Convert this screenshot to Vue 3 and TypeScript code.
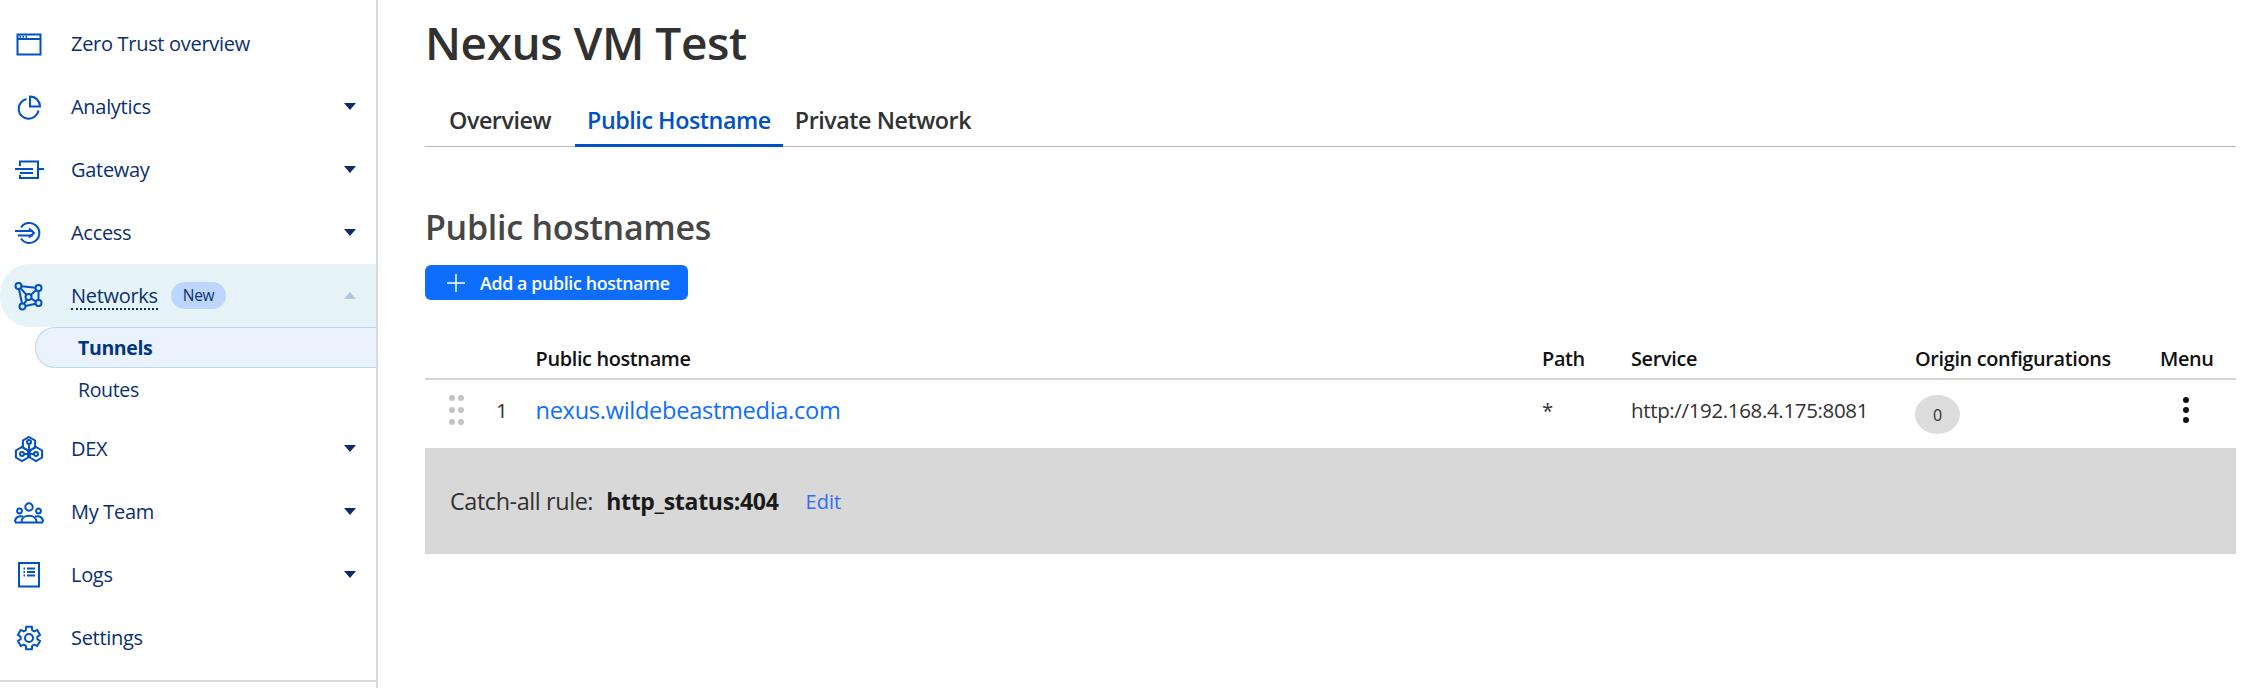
<script setup lang="ts">
// Tunnel detail page: left nav + public hostname table.

type NavItem = {
  label: string;
  paths: string[];
  caret?: boolean;
};

function gearPath(cx: number, cy: number, outer: number, inner: number): string {
  const pts: string[] = [];
  for (let i = 0; i < 6; i++) {
    const a = (Math.PI / 3) * i - Math.PI / 2;
    const spread = [-0.25, 0.25];
    for (const s of spread) {
      pts.push(`${(cx + outer * Math.cos(a + s)).toFixed(2)} ${(cy + outer * Math.sin(a + s)).toFixed(2)}`);
    }
    const m = a + Math.PI / 6;
    pts.push(`${(cx + inner * Math.cos(m - 0.14)).toFixed(2)} ${(cy + inner * Math.sin(m - 0.14)).toFixed(2)}`);
    pts.push(`${(cx + inner * Math.cos(m + 0.14)).toFixed(2)} ${(cy + inner * Math.sin(m + 0.14)).toFixed(2)}`);
  }
  return "M" + pts.join("L") + "Z";
}

const hex = (x: number, y: number, r: number) =>
  `M${x} ${y - r}L${x + r * 0.87} ${y - r / 2}V${y + r / 2}L${x} ${y + r}L${x - r * 0.87} ${y + r / 2}V${y - r / 2}Z`;
const ring = (x: number, y: number, r: number) =>
  `M${x - r} ${y}a${r} ${r} 0 1 0 ${r * 2} 0a${r} ${r} 0 1 0 ${-r * 2} 0Z`;

const topItems: NavItem[] = [
  {
    label: "Zero Trust overview",
    paths: ["M4.5 6.5H27.5V26.5H4.5Z", "M4.5 11H27.5", "M6.5 8.8H8M9.5 8.8H11M12.5 8.8H14"],
  },
  {
    label: "Analytics",
    caret: true,
    paths: ["M13.5 8A10 10 0 1 0 25.5 19.5", "M17 5.5A10 10 0 0 1 27 15.5H17Z"],
  },
  {
    label: "Gateway",
    caret: true,
    paths: ["M7 12V7.5H25V24H7V21", "M2 15H20", "M7 19H20", "M25 15H31"],
  },
  {
    label: "Access",
    caret: true,
    paths: ["M8 10.5A10 10 0 1 1 8 21.5", "M2 14H20", "M5 18.5H20", "M16 11.5L21 16L16 20.5"],
  },
];

const networkPaths = [
  ring(5.5, 6, 3),
  ring(25.5, 8, 3),
  ring(25.5, 23, 3),
  ring(9.5, 26.5, 3),
  ring(15.5, 17, 3),
  "M8.5 6.3L22.5 7.7M6 9L9 23.5M12.5 26L22.6 23.7M25.5 11V20",
  "M7.6 8.2L13.4 14.8M23.2 10L17.8 15M11 23.8L14 19.6M22.8 21.6L18.2 18.4",
];

const bottomItems: NavItem[] = [
  {
    label: "DEX",
    caret: true,
    paths: [
      hex(16, 11, 7),
      hex(9, 21, 7),
      hex(23, 21, 7),
      ring(16, 9, 2),
      ring(9, 21, 2),
      ring(23, 21, 2),
      "M16 11V17M11 21H21",
    ],
  },
  {
    label: "My Team",
    caret: true,
    paths: [
      ring(16, 11, 3.7),
      ring(6.5, 15, 2.4),
      ring(25.5, 15, 2.4),
      "M2 26.5H30",
      "M8.5 26C8.5 17.5 23.5 17.5 23.5 26",
      "M2 26C2 20.5 6.5 19.5 10 20.5M30 26C30 20.5 25.5 19.5 22 20.5",
    ],
  },
  {
    label: "Logs",
    caret: true,
    paths: [
      "M6 4H26V27.5H6Z",
      "M10.5 9.5H12M14 9.5H22M10.5 13H12M14 13H22M10.5 16.5H12M14 16.5H22",
    ],
  },
  {
    label: "Settings",
    paths: [gearPath(16, 16, 11.5, 8.5), ring(16, 16, 4)],
  },
];
</script>

<template>
  <div class="page">
    <aside class="sidebar">
      <nav class="nav">
        <a v-for="item in topItems" :key="item.label" class="nav-row">
          <svg class="nav-icon" viewBox="0 0 32 32"><path v-for="d in item.paths" :key="d" :d="d" /></svg>
          <span class="nav-label">{{ item.label }}</span>
          <span v-if="item.caret" class="caret" />
        </a>

        <a class="nav-row open">
          <svg class="nav-icon" viewBox="0 0 32 32"><path v-for="d in networkPaths" :key="d" :d="d" /></svg>
          <span class="nav-label dotted">Networks</span>
          <span class="new-badge">New</span>
          <span class="caret up" />
        </a>
        <a class="sub-row active">Tunnels</a>
        <a class="sub-row">Routes</a>

        <div class="nav-rest">
          <a v-for="item in bottomItems" :key="item.label" class="nav-row">
            <svg class="nav-icon" viewBox="0 0 32 32"><path v-for="d in item.paths" :key="d" :d="d" /></svg>
            <span class="nav-label">{{ item.label }}</span>
            <span v-if="item.caret" class="caret" />
          </a>
        </div>
      </nav>
      <hr class="side-rule" />
    </aside>

    <main class="main">
      <h1 class="title">Nexus VM Test</h1>

      <div class="tabs">
        <a class="tab">Overview</a>
        <a class="tab active">Public Hostname</a>
        <a class="tab">Private Network</a>
      </div>

      <h2 class="section-title">Public hostnames</h2>

      <button type="button" class="add-btn">
        <svg class="plus" viewBox="0 0 18 18"><path d="M9 0V18M0 9H18" /></svg>
        Add a public hostname
      </button>

      <div class="table">
        <div class="table-row head">
          <span />
          <span>Public hostname</span>
          <span>Path</span>
          <span>Service</span>
          <span>Origin configurations</span>
          <span>Menu</span>
        </div>
        <div class="table-row body">
          <span class="drag-cell">
            <span class="drag"><i v-for="n in 6" :key="n" /></span>
            <span class="index">1</span>
          </span>
          <a class="host">nexus.wildebeastmedia.com</a>
          <span class="path">*</span>
          <span class="service">http://192.168.4.175:8081</span>
          <span class="count-cell"><span class="count">0</span></span>
          <span class="menu"><i /><i /><i /></span>
        </div>
        <div class="catch-all">
          <span class="catch-label">Catch-all rule:</span>
          <strong class="catch-value">http_status:404</strong>
          <a class="edit">Edit</a>
        </div>
      </div>
    </main>
  </div>
</template>

<style>
html,
body {
  margin: 0;
  background: #fff;
  overflow: hidden;
}
</style>

<style scoped>
.page {
  display: flex;
  width: 2257px;
  height: 688px;
  overflow: hidden;
  font-family: "Open Sans", "Noto Sans", sans-serif;
  color: #313131;
}

.sidebar {
  width: 378px;
  box-sizing: border-box;
  flex: none;
  border-right: 2px solid #d9d9d9;
  padding-top: 12px;
}

.nav-row {
  display: flex;
  align-items: center;
  height: 63px;
  color: #0a2f6e;
  font-size: 20px;
  letter-spacing: -0.3px;
}

.nav-icon {
  width: 32px;
  height: 32px;
  margin: 0 26px 0 13px;
  flex: none;
  fill: none;
  stroke: #0051c3;
  stroke-width: 2;
}

.nav-label.dotted {
  border-bottom: 2px dotted #0a2f6e;
  line-height: 25px;
  margin-top: 2px;
}

.new-badge {
  margin-left: 13px;
  padding: 0 12px;
  height: 27px;
  line-height: 27px;
  border-radius: 14px;
  background: #bdd6fd;
  font-size: 15.5px;
}

.caret {
  margin-left: auto;
  margin-right: 20px;
  border-left: 6.5px solid transparent;
  border-right: 6.5px solid transparent;
  border-top: 7px solid #0b2a66;
}

.caret.up {
  border-top: 0;
  border-bottom: 7px solid #b4c8da;
}

.nav-row.open {
  background: #e6f4fa;
  border-radius: 30px 0 0 30px;
}

.sub-row {
  display: flex;
  align-items: center;
  box-sizing: border-box;
  height: 42px;
  padding-left: 78px;
  color: #0a2f6e;
  font-size: 19.5px;
  letter-spacing: -0.35px;
}

.sub-row.active {
  height: 41px;
  margin-left: 35px;
  padding-left: 42px;
  background: #eaf2fd;
  border: 1px solid #bcd6fb;
  border-right: 0;
  border-radius: 20px 0 0 20px;
  font-weight: 700;
  color: #003681;
}

.nav-rest {
  margin-top: 7px;
}

.side-rule {
  margin: 11px 0 0;
  border: 0;
  border-top: 2px solid #d9d9d9;
}

.main {
  flex: 1;
  min-width: 0;
  padding: 0 21px 0 47px;
}

.title {
  margin: 16px 0 0 0;
  font-size: 46px;
  line-height: 52px;
  font-weight: 600;
  letter-spacing: -0.45px;
  color: #313131;
}

.tabs {
  display: flex;
  height: 79px;
  box-sizing: border-box;
  border-bottom: 1px solid #b8b8b8;
  align-items: flex-end;
}

.tab {
  padding: 0 12px 7px;
  font-size: 23.3px;
  line-height: 33px;
  font-weight: 600;
  letter-spacing: -0.45px;
  margin-bottom: -1px;
  border-bottom: 3px solid transparent;
}

.tab:first-child {
  padding: 0 24px 7px 24px;
}

.tab.active {
  color: #0051c3;
  border-bottom-color: #0051c3;
}

.section-title {
  margin: 58px 0 0;
  font-size: 34px;
  line-height: 44px;
  font-weight: 600;
  letter-spacing: -0.28px;
  color: #464646;
}

.add-btn {
  display: flex;
  align-items: center;
  height: 35px;
  margin-top: 16px;
  padding: 0 18px 0 22px;
  gap: 15px;
  border: 0;
  border-radius: 6px;
  background: #0d6efd;
  color: #fff;
  font-family: inherit;
  font-size: 17.8px;
  font-weight: 600;
  letter-spacing: -0.35px;
}

.plus {
  width: 18px;
  height: 18px;
  stroke: #fff;
  stroke-width: 1.5;
  fill: none;
}

.table {
  margin-top: 46px;
}

.table-row {
  display: grid;
  grid-template-columns: 110.5px 1006.5px 89px 284px 245px 76px;
  align-items: center;
}

.table-row.head {
  height: 32px;
  padding-bottom: 4px;
  margin-top: -4px;
  font-size: 19.9px;
  font-weight: 600;
  letter-spacing: -0.35px;
  color: #111;
  border-bottom: 2px solid #d4d4d4;
}

.table-row.body {
  height: 68px;
  font-size: 20.5px;
  letter-spacing: -0.35px;
}

.drag-cell,
.host,
.path,
.service,
.menu {
  position: relative;
  top: -4px;
}

.drag-cell {
  display: flex;
  align-items: center;
}

.drag {
  display: grid;
  grid-template-columns: 6px 6px;
  gap: 6px 3px;
  margin-left: 24px;
}

.drag i {
  width: 6px;
  height: 6px;
  border-radius: 50%;
  background: #c4c4c4;
}

.index {
  margin-left: 32px;
}

.host {
  color: #0d6efd;
  font-size: 23.6px;
  font-weight: 500;
  letter-spacing: -0.3px;
}

.count {
  display: inline-flex;
  align-items: center;
  justify-content: center;
  width: 45px;
  height: 39px;
  padding-top: 1px;
  box-sizing: border-box;
  border-radius: 50%;
  background: #dcdcdc;
  font-size: 16px;
}

.count-cell {
  display: flex;
}

.menu {
  display: flex;
  flex-direction: column;
  align-items: center;
  gap: 4px;
  width: 52px;
}

.menu i {
  width: 6px;
  height: 6px;
  border-radius: 50%;
  background: #111;
}

.catch-all {
  display: flex;
  align-items: center;
  height: 106px;
  box-sizing: border-box;
  padding-left: 25px;
  background: #d8d8d8;
  font-size: 23px;
}

.catch-label {
  font-size: 23.4px;
  letter-spacing: -0.4px;
}

.catch-value {
  margin-left: 13px;
  letter-spacing: -0.3px;
  color: #1a1a1a;
}

.edit {
  margin-left: 27px;
  color: #2f6df6;
  font-size: 20px;
}
</style>
